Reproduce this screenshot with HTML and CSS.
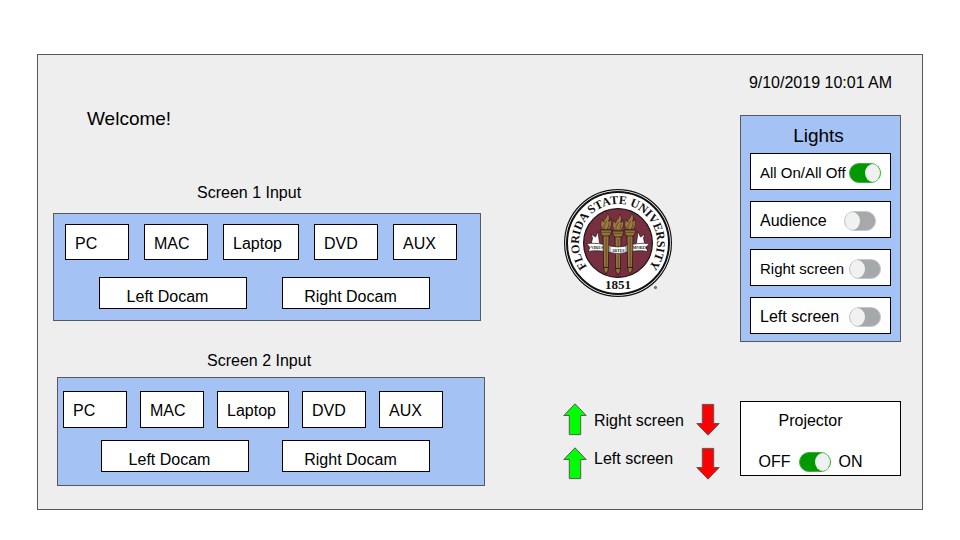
FILE: index.html
```html
<!DOCTYPE html>
<html lang="en">
<head>
<meta charset="utf-8">
<meta name="viewport" content="width=device-width, initial-scale=1">
<title>Classroom control panel</title>
<link rel="stylesheet" href="styles.css">
</head>
<body>
<svg class="defs" width="0" height="0" aria-hidden="true">
  <symbol id="arrow" viewBox="0 0 24 33">
    <path d="M12 0.8 L23.2 12.5 H17.7 V31.6 H6.3 V12.5 H0.8 Z" stroke="#595959" stroke-width="1"/>
  </symbol>
</svg>
<main class="console">
  <div class="inputs">
    <h1 class="welcome">Welcome!</h1>
    <section class="screen" aria-labelledby="s1">
      <h2 class="screen-title" id="s1">Screen 1 Input</h2>
      <div class="panel sources">
        <div class="row">
          <button class="source">PC</button>
          <button class="source">MAC</button>
          <button class="source source-wide">Laptop</button>
          <button class="source">DVD</button>
          <button class="source">AUX</button>
        </div>
        <div class="row docams">
          <button class="docam">Left Docam</button>
          <button class="docam">Right Docam</button>
        </div>
      </div>
    </section>
    <section class="screen screen-two" aria-labelledby="s2">
      <h2 class="screen-title" id="s2">Screen 2 Input</h2>
      <div class="panel sources">
        <div class="row">
          <button class="source">PC</button>
          <button class="source">MAC</button>
          <button class="source source-wide">Laptop</button>
          <button class="source">DVD</button>
          <button class="source">AUX</button>
        </div>
        <div class="row docams">
          <button class="docam">Left Docam</button>
          <button class="docam">Right Docam</button>
        </div>
      </div>
    </section>
  </div>

  <div class="middle">
    <svg class="seal" viewBox="-1 -1 110 110" role="img" aria-label="Florida State University seal">
      <defs>
        <path id="ring" d="M54 93 A39 39 0 0 1 54 15 A39 39 0 0 1 54 93"/>
        <g id="torch">
          <path d="M-3 1 H3 L2.4 33 Q2.8 37 0 40 Q-2.8 37 -2.4 33 Z" fill="#94733f" stroke="#1c120c" stroke-width="0.7"/>
          <path d="M0.2 4 V33" stroke="#4a331a" stroke-width="0.6"/>
          <path d="M-2.8 33.5 H2.8" stroke="#1c120c" stroke-width="0.8"/>
          <path d="M-5.6 -4 H5.6 V-1.5 L3.4 2 H-3.4 L-5.6 -1.5 Z" fill="#94733f" stroke="#1c120c" stroke-width="0.7"/>
          <path d="M-5 -1.6 H5" stroke="#4a331a" stroke-width="0.6"/>
          <path d="M-2.8 -4.5 C-6.2 -8 -5.5 -11 -4 -15 C-3.500 -13.500 -3 -12.500 -2.300 -12 C-2 -15.500 1.500 -16.500 1.500 -21 C4 -18 3.500 -15 2.500 -12.500 C4 -12.500 4.300 -13.500 4.600 -15.500 C6 -11 5.800 -8 2.800 -4.500 Z" fill="#9c7842" stroke="#1c120c" stroke-width="0.5"/>
          <path d="M-1.500 -5 C-3.500 -8.500 0 -10 0.300 -13 M1.200 -5 C3.800 -8 1.800 -9 3.300 -11" fill="none" stroke="#3a2512" stroke-width="0.6"/>
        </g>
      </defs>
      <circle cx="54" cy="54" r="53.4" fill="#fff" stroke="#111" stroke-width="1.2"/>
      <circle cx="54" cy="54" r="51" fill="#fff" stroke="#111" stroke-width="2"/>
      <circle cx="54" cy="54" r="34.4" fill="#782f40" stroke="#1c1214" stroke-width="1.2"/>
      <text class="seal-name"><textPath href="#ring" startOffset="50%">FLORIDA STATE UNIVERSITY</textPath></text>
      <text class="seal-year" x="54" y="100">1851</text>
      <path d="M27 56 L28.5 49 L27 45 L31.5 48 L34 42.5 L35.5 54 L40 56 Z M81 56 L79.5 49 L81 45 L76.5 48 L74 42.5 L72.5 54 L68 56 Z" fill="#fff" stroke="#1c1214" stroke-width="0.7"/>
      <path d="M22.5 54.5 Q32 53.5 47 56.5 V63.5 Q34 60.5 24 62.5 L26 58.5 Z M85.5 54.5 Q76 53.5 61 56.5 V63.5 Q74 60.5 84 62.5 L82 58.5 Z" fill="#fff" stroke="#1c1214" stroke-width="0.7"/>
      <use href="#torch" x="42" y="45"/>
      <use href="#torch" x="66" y="45"/>
      <use href="#torch" x="54" y="46"/>
      <path d="M46 57 Q54 59 62 57 V63.5 Q54 65.5 46 63.5 Z" fill="#fff" stroke="#1c1214" stroke-width="0.6"/>
      <text class="seal-motto" x="33" y="60">VIRES</text>
      <text class="seal-motto" x="54" y="63">ARTES</text>
      <text class="seal-motto" x="76" y="60">MORES</text>
      <circle cx="91.5" cy="98.5" r="1.2" fill="#777" stroke="#444" stroke-width="0.6"/>
    </svg>
    <div class="lifts">
      <div class="lift-arrows">
        <button class="lift lift-up" aria-label="Raise right screen"><svg class="arrow"><use href="#arrow"/></svg></button>
        <button class="lift lift-up" aria-label="Raise left screen"><svg class="arrow"><use href="#arrow"/></svg></button>
      </div>
      <div class="lift-names">
        <span>Right screen</span>
        <span>Left screen</span>
      </div>
      <div class="lift-arrows">
        <button class="lift lift-down" aria-label="Lower right screen"><svg class="arrow"><use href="#arrow"/></svg></button>
        <button class="lift lift-down" aria-label="Lower left screen"><svg class="arrow"><use href="#arrow"/></svg></button>
      </div>
    </div>
  </div>

  <div class="side">
    <time class="clock" datetime="2019-09-10T10:01">9/10/2019 10:01 AM</time>
    <section class="panel lights" aria-labelledby="lights">
      <h2 class="lights-title" id="lights">Lights</h2>
      <label class="light light-small">All On/All Off <input class="toggle" type="checkbox" checked></label>
      <label class="light light-inset">Audience <input class="toggle" type="checkbox"></label>
      <label class="light light-small">Right screen <input class="toggle" type="checkbox"></label>
      <label class="light">Left screen <input class="toggle" type="checkbox"></label>
    </section>
    <section class="projector" aria-labelledby="projector">
      <h2 class="projector-title" id="projector">Projector</h2>
      <label class="projector-switch">OFF <input class="toggle" type="checkbox" checked> ON</label>
    </section>
  </div>
</main>
</body>
</html>
```
FILE: styles.css
```css
* {
  box-sizing: border-box;
}

body {
  margin: 0;
  padding: 54px 37px 30px;
  background: #fff;
  color: #000;
  font: 16px/20px "Liberation Sans", Arial, sans-serif;
}

h1,
h2 {
  margin: 0;
  font-size: 16px;
  font-weight: 400;
}

button {
  font: inherit;
  color: inherit;
  cursor: pointer;
}

.defs {
  display: none;
}

.console {
  display: grid;
  grid-template-columns: 432px 1fr 161px;
  padding: 0 21px 23px 15px;
  background: #eee;
  border: 1px solid #595959;
}

.panel {
  background: #a4c2f4;
  border: 1px solid #595959;
}

/* Screen inputs */

.inputs {
  padding-top: 53px;
}

.welcome {
  margin-bottom: 53px;
  padding-left: 34px;
  font-size: 19px;
  line-height: 22px;
}

.screen {
  margin-right: 4px;
}

.screen-title {
  margin-bottom: 10px;
  padding-left: 144px;
}

.sources {
  display: flex;
  flex-direction: column;
  gap: 17px;
  padding: 10px 11px 11px;
}

.row {
  display: flex;
  gap: 15px;
}

.source,
.docam {
  background: #fff;
  border: 1px solid #000;
}

.source {
  width: 64px;
  height: 36px;
  padding: 3px 0 0 9px;
  text-align: left;
}

.source-wide {
  width: 76px;
}

.docams {
  gap: 35px;
  padding-left: 34px;
}

.docam {
  width: 148px;
  height: 32px;
  padding: 8px 11px 0 0;
}

.screen-two {
  margin: 30px 0 0 4px;
}

.screen-two .screen-title {
  margin-bottom: 6px;
  padding-left: 150px;
}

.screen-two .sources {
  gap: 12px;
  padding: 13px 5px;
}

.screen-two .row {
  gap: 13px;
}

.screen-two .source {
  height: 37px;
}

.screen-two .source-wide {
  width: 72px;
}

.screen-two .docams {
  gap: 33px;
  padding-left: 38px;
}

/* Seal and screen lifts */

.middle {
  padding: 133px 0 0 78px;
}

.seal {
  display: block;
  width: 110px;
  height: 110px;
}

.seal text {
  font-family: "Liberation Serif", serif;
  font-weight: 700;
  text-anchor: middle;
  fill: #111;
}

.seal .seal-name {
  font-size: 12px;
}

.seal .seal-year {
  font-size: 13px;
}

.seal .seal-motto {
  font-size: 4px;
}

.lifts {
  display: flex;
  margin-top: 105px;
}

.lift-arrows {
  display: flex;
  flex-direction: column;
  gap: 11px;
}

.lift {
  display: block;
  width: 24px;
  height: 33px;
  padding: 0;
  background: none;
  border: 0;
}

.arrow {
  display: block;
  width: 24px;
  height: 33px;
}

.lift-up {
  fill: #0f0;
}

.lift-down {
  fill: #f00;
}

.lift-down .arrow {
  transform: rotate(180deg);
}

.lift-names {
  display: flex;
  flex-direction: column;
  gap: 18px;
  padding: 8px 12px 0 7px;
  white-space: nowrap;
}

/* Clock, lights and projector */

.side {
  padding-top: 18px;
}

.clock {
  display: block;
  text-align: center;
}

.lights {
  display: flex;
  flex-direction: column;
  gap: 11px;
  margin: 22px 0 59px;
  padding: 9px 9px 7px;
}

.lights-title {
  margin: 0 4px -5px 0;
  font-size: 19px;
  line-height: 22px;
  text-align: center;
}

.light {
  display: flex;
  align-items: center;
  justify-content: space-between;
  height: 37px;
  padding: 2px 9px 0;
  background: #fff;
  border: 1px solid #000;
  white-space: nowrap;
}

.light-small {
  font-size: 15px;
}

.light-inset {
  padding-right: 14px;
}

.toggle {
  appearance: none;
  flex: none;
  display: flex;
  width: 32px;
  height: 20px;
  margin: 0;
  background: #a7a8ac;
  border: 1px solid #c4c6c8;
  border-radius: 10px;
  cursor: pointer;
}

.toggle::before {
  content: "";
  width: 15px;
  background: #eff2f1;
  border-radius: 50%;
}

.toggle:checked {
  justify-content: flex-end;
  background: #090;
  border-color: #3fae3f;
}

.projector {
  padding: 9px 20px 3px 0;
  background: #fff;
  border: 1px solid #000;
  text-align: center;
}

.projector-title {
  margin-bottom: 21px;
}

.projector-switch {
  display: flex;
  align-items: center;
  justify-content: center;
  gap: 8px;
}
```
